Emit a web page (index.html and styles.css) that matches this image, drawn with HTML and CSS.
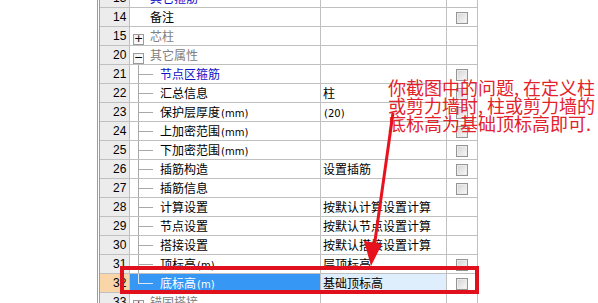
FILE: index.html
```html
<!DOCTYPE html>
<html lang="zh">
  <head>
    <meta charset="UTF-8" />
    <title>属性编辑</title>
    <link rel="stylesheet" href="styles.css">
  </head>
  <body>
    <div class="page">
      <div class="grid">
        <div class="row">
          <div class="num">13</div>
          <div class="name root blue">其它箍筋</div>
          <div class="val"></div>
          <div class="chk"></div>
        </div>
        <div class="row">
          <div class="num">14</div>
          <div class="name root">备注</div>
          <div class="val"></div>
          <div class="chk"><span class="cb"></span></div>
        </div>
        <div class="row">
          <div class="num">15</div>
          <div class="name group grey"><span class="box">+</span>芯柱</div>
          <div class="val"></div>
          <div class="chk"></div>
        </div>
        <div class="row">
          <div class="num">20</div>
          <div class="name group open grey"><span class="box">−</span>其它属性</div>
          <div class="val"></div>
          <div class="chk"></div>
        </div>
        <div class="row">
          <div class="num">21</div>
          <div class="name child blue">节点区箍筋</div>
          <div class="val"></div>
          <div class="chk"><span class="cb"></span></div>
        </div>
        <div class="row">
          <div class="num">22</div>
          <div class="name child">汇总信息</div>
          <div class="val">柱</div>
          <div class="chk"><span class="cb"></span></div>
        </div>
        <div class="row">
          <div class="num">23</div>
          <div class="name child">保护层厚度<span class="unit">(mm)</span></div>
          <div class="val"><span class="unit">(20)</span></div>
          <div class="chk"><span class="cb"></span></div>
        </div>
        <div class="row">
          <div class="num">24</div>
          <div class="name child">上加密范围<span class="unit">(mm)</span></div>
          <div class="val"></div>
          <div class="chk"><span class="cb"></span></div>
        </div>
        <div class="row">
          <div class="num">25</div>
          <div class="name child">下加密范围<span class="unit">(mm)</span></div>
          <div class="val"></div>
          <div class="chk"><span class="cb"></span></div>
        </div>
        <div class="row">
          <div class="num">26</div>
          <div class="name child">插筋构造</div>
          <div class="val">设置插筋</div>
          <div class="chk"><span class="cb"></span></div>
        </div>
        <div class="row">
          <div class="num">27</div>
          <div class="name child">插筋信息</div>
          <div class="val"></div>
          <div class="chk"><span class="cb"></span></div>
        </div>
        <div class="row">
          <div class="num">28</div>
          <div class="name child">计算设置</div>
          <div class="val">按默认计算设置计算</div>
          <div class="chk"></div>
        </div>
        <div class="row">
          <div class="num">29</div>
          <div class="name child">节点设置</div>
          <div class="val">按默认节点设置计算</div>
          <div class="chk"></div>
        </div>
        <div class="row">
          <div class="num">30</div>
          <div class="name child">搭接设置</div>
          <div class="val">按默认搭接设置计算</div>
          <div class="chk"></div>
        </div>
        <div class="row">
          <div class="num">31</div>
          <div class="name child">顶标高<span class="unit">(m)</span></div>
          <div class="val">层顶标高</div>
          <div class="chk"><span class="cb"></span></div>
        </div>
        <div class="row selected">
          <div class="num">32</div>
          <div class="name child last">底标高<span class="unit">(m)</span></div>
          <div class="val">基础顶标高</div>
          <div class="chk"><span class="cb"></span></div>
        </div>
        <div class="row">
          <div class="num">33</div>
          <div class="name group grey"><span class="box">+</span>锚固搭接</div>
          <div class="val"></div>
          <div class="chk"></div>
        </div>
      </div>

      <!-- annotation drawn over the screenshot -->
      <div class="note">
        <div>你截图中的问题, 在定义柱</div>
        <div>或剪力墙时, 柱或剪力墙的</div>
        <div>底标高为基础顶标高即可.</div>
      </div>
      <svg class="arrow" width="598" height="303" viewBox="0 0 598 303">
        <line x1="393" y1="113" x2="374" y2="248" stroke="#e8121e" stroke-width="3" />
        <polygon points="371,266 364,241 382,244" fill="#e8121e" />
      </svg>
      <div class="mark"></div>
    </div>
  </body>
</html>
```

FILE: styles.css
```css
body {
  margin: 0;
  background: #fff;
  font-family: "Noto Sans CJK SC", sans-serif;
  font-size: 12px;
  color: #000;
}

.page {
  position: relative;
  width: 598px;
  height: 303px;
  overflow: hidden;
}

/* property grid */
.grid {
  margin-left: 97px;
  margin-top: -11px;
  width: 381px;
  border-left: 3px double #9c9c9c;
}

.row {
  display: grid;
  grid-template-columns: 30px 191px 126px 31px;
  height: 19px;
}

.row > div {
  box-sizing: border-box;
  height: 19px;
  line-height: 18px;
  white-space: nowrap;
  border-right: 1px solid #c0c0c0;
  border-bottom: 1px solid #c0c0c0;
}

.num {
  background: #ececec;
  padding-left: 13px;
  font-family: "Liberation Sans", sans-serif;
  font-size: 12px;
}

.name.root {
  padding-left: 20px;
}

.name.group {
  padding-left: 3px;
}

/* expand / collapse box */
.box {
  display: inline-block;
  vertical-align: -1px;
  box-sizing: border-box;
  width: 11px;
  height: 11px;
  margin-right: 6px;
  border: 1px solid #9a9a9a;
  background: linear-gradient(135deg, #f0f0f0, #fff);
  font-family: "DejaVu Sans", sans-serif;
  font-size: 11px;
  line-height: 8px;
  text-align: center;
  color: #000;
}

.name.open {
  background: linear-gradient(#a8a8a8, #a8a8a8) 8px 15px / 1px 4px no-repeat;
}

/* tree connector lines */
.name.child {
  padding-left: 30px;
  background:
    linear-gradient(#a8a8a8, #a8a8a8) 8px 0 / 1px 19px no-repeat,
    linear-gradient(#a8a8a8, #a8a8a8) 9px 9px / 14px 1px no-repeat;
}

.name.child.last {
  background:
    linear-gradient(#d8e6f6, #d8e6f6) 8px 0 / 1px 10px no-repeat,
    linear-gradient(#d8e6f6, #d8e6f6) 9px 9px / 14px 1px no-repeat,
    #3797f5;
}

.unit {
  font-family: "DejaVu Sans", sans-serif;
  font-size: 10px;
  margin-left: 1px;
}

.blue {
  color: #1010c8;
}

.grey {
  color: #808080;
}

.val {
  padding-left: 2px;
}

.chk {
  text-align: center;
}

.cb {
  display: inline-block;
  vertical-align: -2px;
  box-sizing: border-box;
  width: 12px;
  height: 12px;
  border: 1px solid #959595;
  background: linear-gradient(135deg, #d2d2d2, #fafafa);
  box-shadow: inset 0 0 0 1px #ececec;
}

/* selected row */
.selected .num {
  background: #f9d5a8;
}

.selected .name {
  color: #fff;
}

.selected .val {
  background: #dfeefd;
}

/* red annotation on top */
.note {
  position: absolute;
  left: 388px;
  top: 78px;
  color: #e3222b;
  font-size: 18px;
  line-height: 18px;
}

.arrow {
  position: absolute;
  left: 0;
  top: 0;
}

.mark {
  position: absolute;
  left: 120px;
  top: 266px;
  width: 359px;
  height: 28px;
  box-sizing: border-box;
  border: 4px solid #e0101c;
}
```
